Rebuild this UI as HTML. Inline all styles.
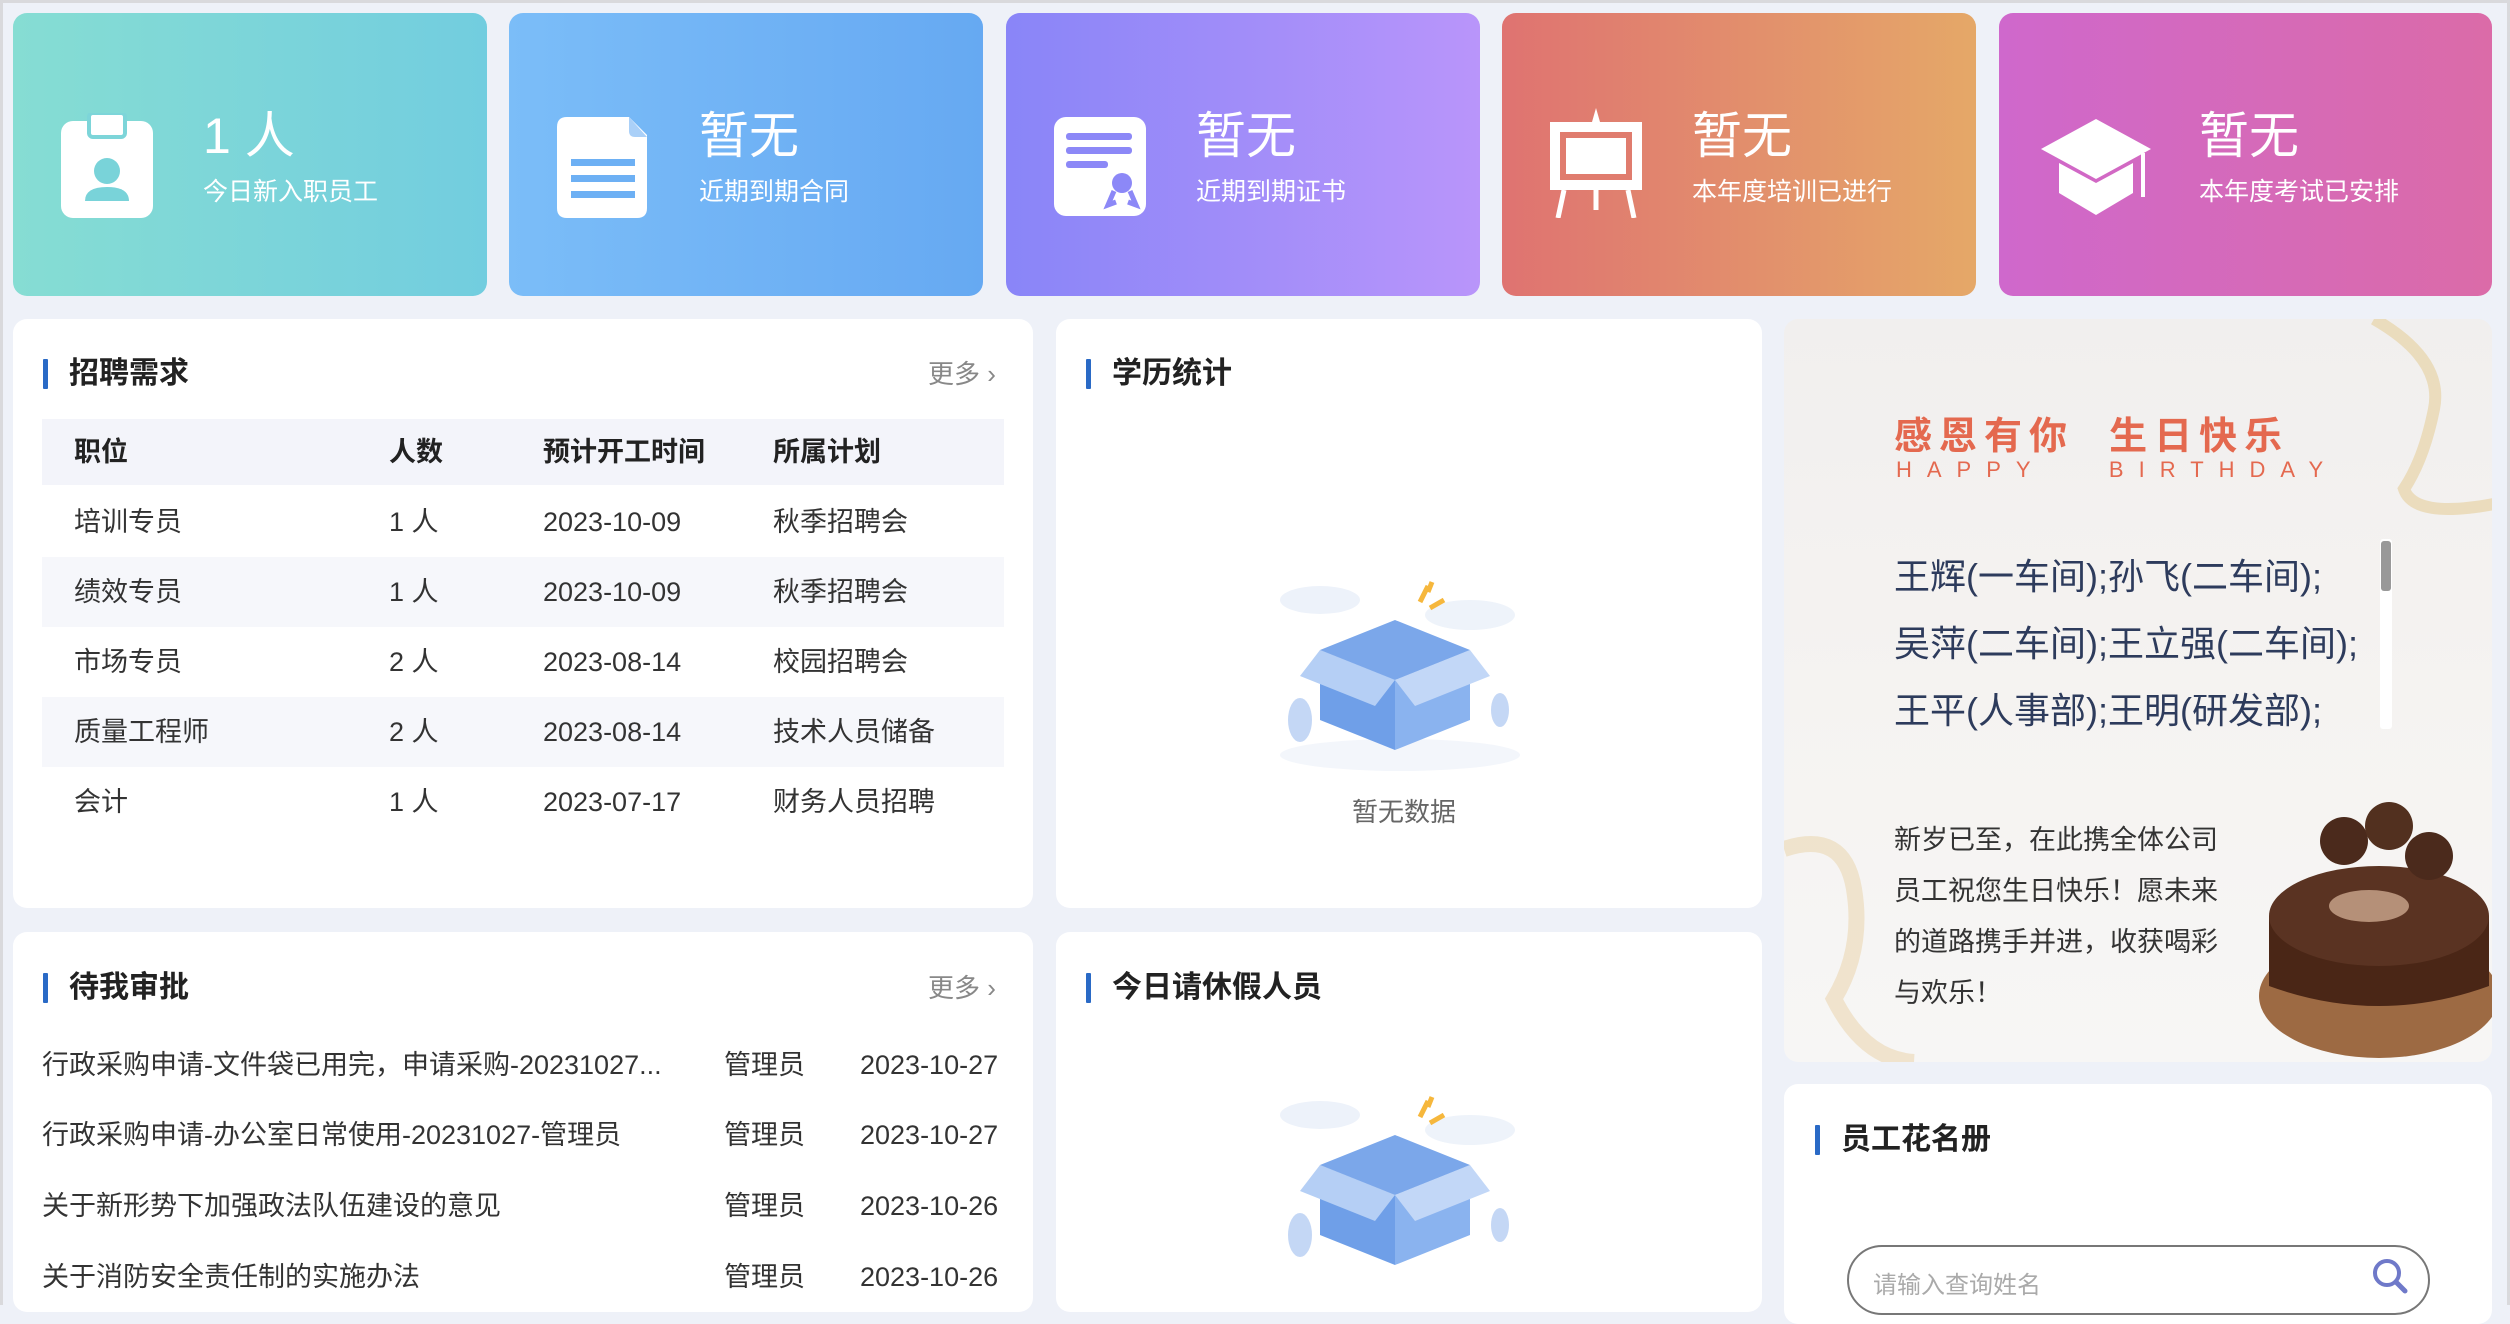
<!DOCTYPE html>
<html><head><meta charset="utf-8"><style>
*{margin:0;padding:0;box-sizing:border-box}
body{width:2510px;height:1305px;overflow:hidden;background:#eef1f8;font-family:"Liberation Sans","Noto Sans CJK SC",sans-serif;position:relative;color:#333}
.a{position:absolute}
.frame{position:absolute;left:0;top:0;width:2510px;height:1305px;border:3px solid #d9d9dc;border-bottom:none;pointer-events:none}
.card{position:absolute;top:13px;height:283px;border-radius:14px;color:#fff}
.card .big{position:absolute;left:190px;top:93px;font-size:50px;line-height:60px}
.card .sub{position:absolute;left:190px;top:162px;font-size:25px;line-height:34px}
.card svg{position:absolute;left:48px;top:100px}
.panel{position:absolute;background:#fff;border-radius:14px}
.tt{position:absolute;font-size:30px;font-weight:bold;color:#222;line-height:40px;padding-left:26px}
.tt:before{content:"";position:absolute;left:0;top:5px;width:5px;height:30px;background:#2a6ac6;border-radius:1px}
.more{position:absolute;font-size:26px;color:#888;line-height:40px}
.tr{position:absolute;left:42px;width:962px;height:70px;font-size:27px;line-height:70px}
.tr span{position:absolute}
.c1{left:32px}.c2{left:347px}.c3{left:501px}.c4{left:731px}
.ar{position:absolute;left:42px;width:962px;height:60px;font-size:27px;line-height:60px}
.ar span{position:absolute}
</style></head><body>

<div class="card" style="left:13px;width:474px;background:linear-gradient(90deg,#86ddd3,#72cddf)">
<svg width="92" height="105" viewBox="0 0 92 105"><rect x="0" y="8" width="92" height="97" rx="12" fill="#fff"/><rect x="28" y="0" width="36" height="24" rx="4" fill="#fff" stroke="#7dd5d9" stroke-width="4"/><circle cx="46" cy="58" r="13" fill="#79d3d9"/><path d="M24 88q0-14 22-14t22 14z" fill="#79d3d9"/></svg>
<div class="big">1 人</div><div class="sub">今日新入职员工</div></div>

<div class="card" style="left:509px;width:474px;background:linear-gradient(90deg,#7bbdf8,#66a9f2)">
<svg width="92" height="105" viewBox="0 0 92 105"><path d="M10 4h62l18 18v73q0 10-10 10H10Q0 105 0 95V14Q0 4 10 4z" fill="#fff"/><path d="M72 4v14q0 6 6 6h12" fill="#aad0f8"/><rect x="14" y="46" width="64" height="7" fill="#6db0f4"/><rect x="14" y="62" width="64" height="7" fill="#6db0f4"/><rect x="14" y="78" width="64" height="7" fill="#6db0f4"/></svg>
<div class="big">暂无</div><div class="sub">近期到期合同</div></div>

<div class="card" style="left:1006px;width:474px;background:linear-gradient(90deg,#8985f8,#b995fa)">
<svg width="92" height="105" viewBox="0 0 92 105"><rect x="0" y="4" width="92" height="99" rx="12" fill="#fff"/><rect x="12" y="20" width="66" height="7" rx="3" fill="#8c88f7"/><rect x="12" y="34" width="66" height="7" rx="3" fill="#8c88f7"/><rect x="12" y="48" width="42" height="7" rx="3" fill="#8c88f7"/><circle cx="68" cy="70" r="10" fill="#8c88f7"/><path d="M60 78l-6 14 8-3M76 78l6 14-8-3" stroke="#8c88f7" stroke-width="5" fill="none"/></svg>
<div class="big">暂无</div><div class="sub">近期到期证书</div></div>

<div class="card" style="left:1502px;width:474px;background:linear-gradient(90deg,#df7371,#e5a868)">
<svg width="96" height="110" viewBox="0 0 96 110" style="left:46px;top:95px"><path d="M48 0l4 14h-8z" fill="#fff"/><rect x="2" y="14" width="92" height="68" fill="#fff"/><rect x="12" y="24" width="72" height="48" fill="#e07c6e"/><rect x="18" y="30" width="60" height="36" fill="#fff"/><path d="M16 82l-6 28M80 82l6 28M48 82v20" stroke="#fff" stroke-width="5"/></svg>
<div class="big">暂无</div><div class="sub">本年度培训已进行</div></div>

<div class="card" style="left:1999px;width:493px;background:linear-gradient(90deg,#cf68cc,#db6ba8)">
<svg width="110" height="100" viewBox="0 0 110 100" style="left:42px;top:106px"><path d="M55 0l55 30-55 30L0 30z" fill="#fff"/><path d="M18 44v30l37 22 37-22V44L55 64z" fill="#fff"/><path d="M102 34v44" stroke="#fff" stroke-width="4"/></svg>
<div class="big" style="left:200px">暂无</div><div class="sub" style="left:200px">本年度考试已安排</div></div>

<!-- 招聘需求 -->
<div class="panel" style="left:13px;top:319px;width:1020px;height:589px"></div>
<div class="tt" style="left:43px;top:354px">招聘需求</div>
<div class="more" style="left:928px;top:354px">更多 ›</div>
<div class="tr" style="top:419px;height:66px;line-height:66px;background:#f3f4fa;font-weight:bold;color:#222"><span class="c1">职位</span><span class="c2">人数</span><span class="c3">预计开工时间</span><span class="c4">所属计划</span></div>
<div class="tr" style="top:487px"><span class="c1">培训专员</span><span class="c2">1 人</span><span class="c3">2023-10-09</span><span class="c4">秋季招聘会</span></div>
<div class="tr" style="top:557px;background:#f6f7fb"><span class="c1">绩效专员</span><span class="c2">1 人</span><span class="c3">2023-10-09</span><span class="c4">秋季招聘会</span></div>
<div class="tr" style="top:627px"><span class="c1">市场专员</span><span class="c2">2 人</span><span class="c3">2023-08-14</span><span class="c4">校园招聘会</span></div>
<div class="tr" style="top:697px;background:#f6f7fb"><span class="c1">质量工程师</span><span class="c2">2 人</span><span class="c3">2023-08-14</span><span class="c4">技术人员储备</span></div>
<div class="tr" style="top:767px"><span class="c1">会计</span><span class="c2">1 人</span><span class="c3">2023-07-17</span><span class="c4">财务人员招聘</span></div>

<!-- 学历统计 -->
<div class="panel" style="left:1056px;top:319px;width:706px;height:589px"></div>
<div class="tt" style="left:1086px;top:354px">学历统计</div>
<svg class="a" style="left:1270px;top:570px" width="260" height="210" viewBox="0 0 260 210"><ellipse cx="50" cy="30" rx="40" ry="14" fill="#edf2fa"/><ellipse cx="200" cy="45" rx="45" ry="15" fill="#eef3fa"/><ellipse cx="130" cy="185" rx="120" ry="16" fill="#f3f6fb"/><path d="M50 80l75-30 75 30-75 30z" fill="#7ba7ea"/><path d="M50 80v70l75 30v-70z" fill="#6f9fe8"/><path d="M200 80v70l-75 30v-70z" fill="#8ab3ef"/><path d="M50 80l-20 26 75 30 20-26z" fill="#b5cff5"/><path d="M200 80l20 26-75 30-20-26z" fill="#c2d7f7"/><path d="M150 32l8-16M160 38l14-8M158 22l4-10" stroke="#f6b73c" stroke-width="5"/><ellipse cx="30" cy="150" rx="12" ry="22" fill="#c4d7f5"/><ellipse cx="230" cy="140" rx="9" ry="17" fill="#c4d7f5"/></svg>
<div class="a" style="left:1352px;top:792px;font-size:26px;color:#666">暂无数据</div>

<!-- 生日 -->
<div class="panel" style="left:1784px;top:319px;width:708px;height:743px;background:linear-gradient(180deg,#f1efee 0%,#f5f3f1 50%,#f7f6f5 100%);overflow:hidden">
<svg class="a" style="left:0;top:0" width="708" height="743"><path d="M590 0q70 40 60 90t-30 80q10 30 90 15" stroke="#e8d7b0" stroke-width="12" fill="none" opacity=".8"/><path d="M0 530q60-20 70 40t-20 110q30 60 80 63" stroke="#ecdcbc" stroke-width="16" fill="none" opacity=".7"/></svg>
<div class="a" style="left:110px;top:86px;font-size:38px;font-weight:bold;color:#e4694f;letter-spacing:7px">感恩有你&nbsp; 生日快乐</div>
<div class="a" style="left:112px;top:138px;font-size:22px;color:#e4694f;letter-spacing:15px">HAPPY&nbsp;&nbsp; BIRTHDAY</div>
<div class="a" style="left:110px;top:224px;font-size:36px;line-height:67px;color:#2d3b5c;white-space:nowrap">王辉(一车间);孙飞(二车间);<br>吴萍(二车间);王立强(二车间);<br>王平(人事部);王明(研发部);</div>
<div class="a" style="left:596px;top:220px;width:12px;height:190px;background:#fff;border-radius:3px"></div>
<div class="a" style="left:597px;top:222px;width:10px;height:50px;background:#999;border-radius:3px"></div>
<div class="a" style="left:110px;top:496px;font-size:27px;line-height:51px;color:#333;width:340px">新岁已至，在此携全体公司员工祝您生日快乐！愿未来的道路携手并进，收获喝彩与欢乐！</div>
<svg class="a" style="left:455px;top:477px" width="253" height="266"><ellipse cx="140" cy="200" rx="120" ry="62" fill="#9d6a43"/><path d="M30 120v70q110 40 220 0v-70z" fill="#4a2616"/><ellipse cx="140" cy="120" rx="110" ry="50" fill="#5a3322"/><ellipse cx="130" cy="110" rx="40" ry="16" fill="#b59078"/><circle cx="105" cy="45" r="24" fill="#4b2a1c"/><circle cx="150" cy="30" r="24" fill="#52301f"/><circle cx="190" cy="60" r="24" fill="#4b2a1c"/></svg>
</div>

<!-- 待我审批 -->
<div class="panel" style="left:13px;top:932px;width:1020px;height:380px"></div>
<div class="tt" style="left:43px;top:968px">待我审批</div>
<div class="more" style="left:928px;top:968px">更多 ›</div>
<div class="ar" style="top:1035px"><span style="left:0">行政采购申请-文件袋已用完，申请采购-20231027...</span><span style="left:682px">管理员</span><span style="left:818px">2023-10-27</span></div>
<div class="ar" style="top:1105px"><span style="left:0">行政采购申请-办公室日常使用-20231027-管理员</span><span style="left:682px">管理员</span><span style="left:818px">2023-10-27</span></div>
<div class="ar" style="top:1176px"><span style="left:0">关于新形势下加强政法队伍建设的意见</span><span style="left:682px">管理员</span><span style="left:818px">2023-10-26</span></div>
<div class="ar" style="top:1247px"><span style="left:0">关于消防安全责任制的实施办法</span><span style="left:682px">管理员</span><span style="left:818px">2023-10-26</span></div>

<!-- 今日请休假人员 -->
<div class="panel" style="left:1056px;top:932px;width:706px;height:380px"></div>
<div class="tt" style="left:1086px;top:968px">今日请休假人员</div>
<svg class="a" style="left:1270px;top:1085px" width="260" height="210" viewBox="0 0 260 210"><ellipse cx="50" cy="30" rx="40" ry="14" fill="#edf2fa"/><ellipse cx="200" cy="45" rx="45" ry="15" fill="#eef3fa"/><path d="M50 80l75-30 75 30-75 30z" fill="#7ba7ea"/><path d="M50 80v70l75 30v-70z" fill="#6f9fe8"/><path d="M200 80v70l-75 30v-70z" fill="#8ab3ef"/><path d="M50 80l-20 26 75 30 20-26z" fill="#b5cff5"/><path d="M200 80l20 26-75 30-20-26z" fill="#c2d7f7"/><path d="M150 32l8-16M160 38l14-8M158 22l4-10" stroke="#f6b73c" stroke-width="5"/><ellipse cx="30" cy="150" rx="12" ry="22" fill="#c4d7f5"/><ellipse cx="230" cy="140" rx="9" ry="17" fill="#c4d7f5"/></svg>

<!-- 员工花名册 -->
<div class="panel" style="left:1784px;top:1084px;width:708px;height:240px"></div>
<div class="tt" style="left:1815px;top:1120px">员工花名册</div>
<div class="a" style="left:1847px;top:1245px;width:583px;height:70px;border:2px solid #777;border-radius:35px;font-size:24px;color:#aaa;padding:18px 0 0 24px">请输入查询姓名</div>
<svg class="a" style="left:2370px;top:1256px" width="40" height="40"><circle cx="17" cy="17" r="12" stroke="#6f79c9" stroke-width="4" fill="none"/><path d="M26 26l9 9" stroke="#6f79c9" stroke-width="5" stroke-linecap="round"/></svg>

<div class="frame"></div>
</body></html>
